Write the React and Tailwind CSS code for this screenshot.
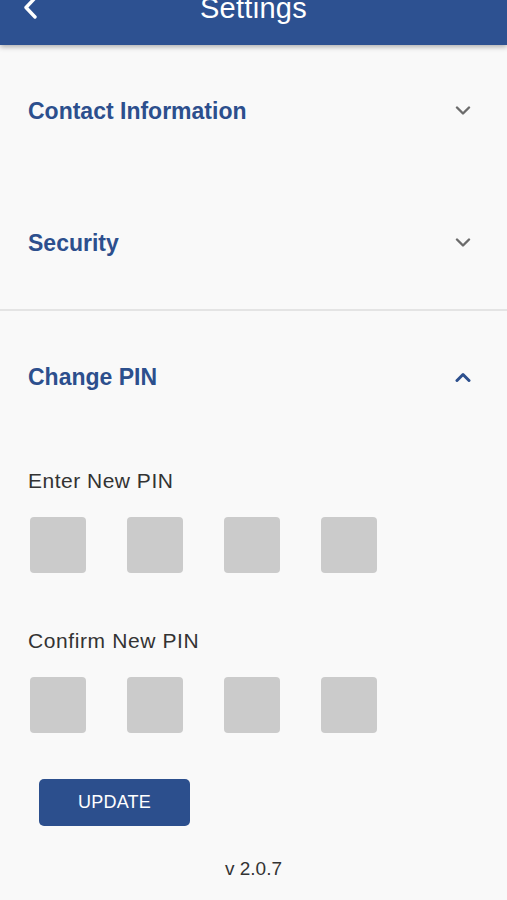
const font = { fontFamily: '"Liberation Sans", Arial, sans-serif' };

const Chevron = ({ up, color, width = 2.4 }) => (
  <svg width="16" height="10" viewBox="0 0 16 10" fill="none">
    <path
      d={up ? "M2 8.5 L8 2.5 L14 8.5" : "M2 1.5 L8 7.5 L14 1.5"}
      stroke={color}
      strokeWidth={width}
      strokeLinecap="round"
      strokeLinejoin="round"
    />
  </svg>
);

const PinRow = () => (
  <div className="flex gap-[41px] pl-[30px]">
    {[0, 1, 2, 3].map((i) => (
      <div key={i} className="w-[56px] h-[56px] rounded-[4px] bg-[#cbcbcb]" />
    ))}
  </div>
);

const Section = ({ title, open }) => (
  <div className="h-[132px] flex items-center justify-between pl-[28px] pr-[36px]">
    <span className="text-[23px] font-bold text-[#2c4f8d]">{title}</span>
    {open ? <Chevron up color="#2c4f8d" width={3} /> : <Chevron color="#6b6b6b" />}
  </div>
);

export default function App() {
  return (
    <div className="w-[507px] h-[900px] bg-[#f9f9f9] overflow-hidden" style={font}>
      {/* Header */}
      <div className="relative h-[45px] bg-[#2d5191] shadow-[0_2px_5px_rgba(0,0,0,0.3)] flex items-start px-[22px]">
        <div className="-mt-[4px]">
          <svg width="18" height="24" viewBox="0 0 18 24" fill="none">
            <path d="M13 2 L4 11.5 L13 21" stroke="#fff" strokeWidth="3.4" strokeLinecap="round" strokeLinejoin="round" />
          </svg>
        </div>
        <div className="flex-1 text-center -mt-[10px] -ml-[18px] text-[29px] leading-[36px] text-white tracking-[0.3px]">
          Settings
        </div>
      </div>

      {/* Accordions */}
      <Section title="Contact Information" />
      <Section title="Security" />
      <div className="h-[2px] bg-[#e4e4e4]" />
      <Section title="Change PIN" open />

      {/* Change PIN body */}
      <div className="mt-[24px] pl-[28px] text-[21px] leading-[28px] tracking-[0.5px] text-[#333]">Enter New PIN</div>
      <div className="mt-[22px]">
        <PinRow />
      </div>
      <div className="mt-[54px] pl-[28px] text-[21px] leading-[28px] tracking-[0.6px] text-[#333]">Confirm New PIN</div>
      <div className="mt-[22px]">
        <PinRow />
      </div>

      <div className="mt-[46px] pl-[39px]">
        <button className="w-[151px] h-[47px] rounded-[5px] bg-[#2c4f8d] text-white text-[18px] tracking-[0.2px]">
          UPDATE
        </button>
      </div>

      <div className="mt-[31px] text-center text-[19px] leading-[24px] text-[#333]">v 2.0.7</div>
    </div>
  );
}
